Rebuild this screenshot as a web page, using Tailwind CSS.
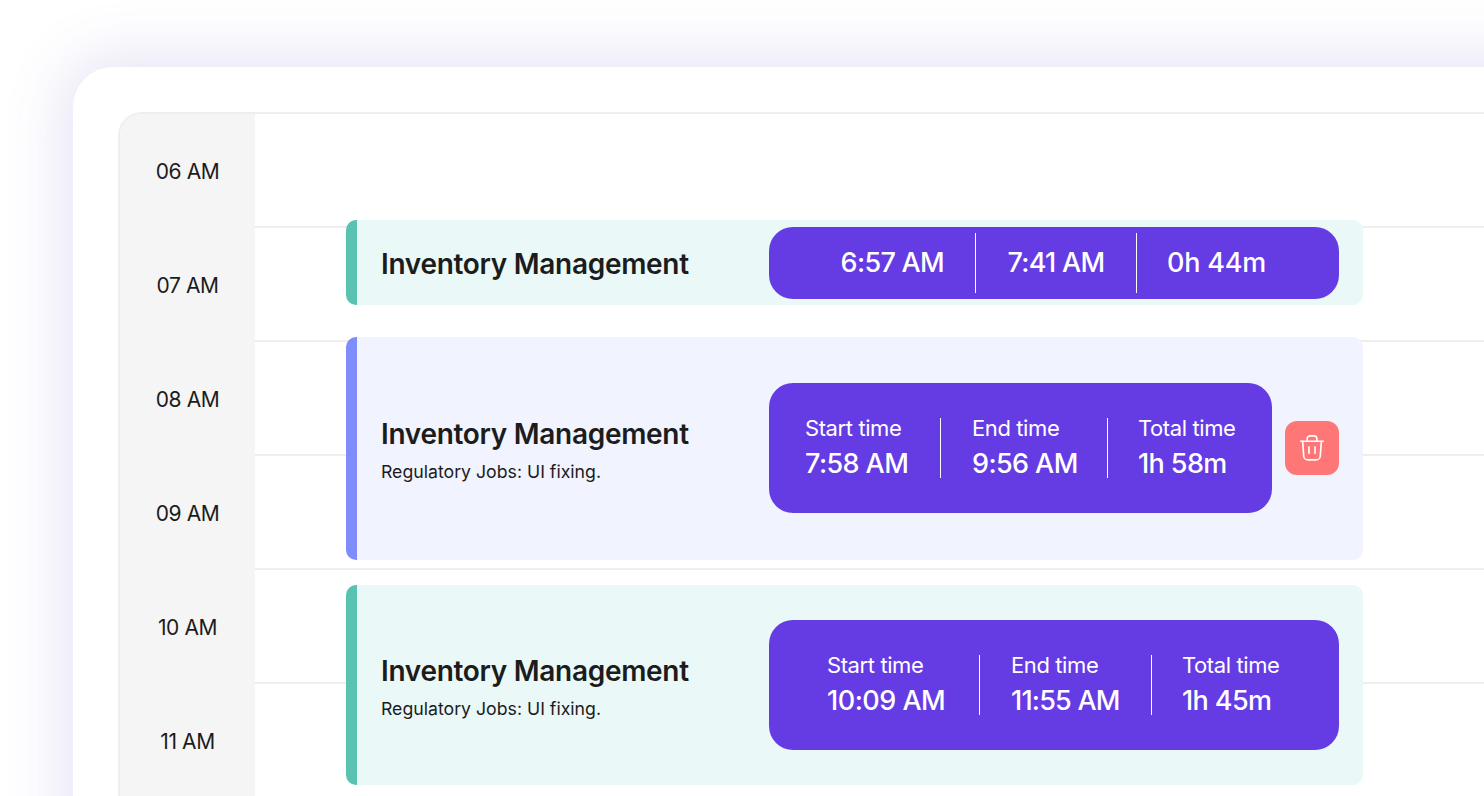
<!DOCTYPE html>
<html lang="en">
<head>
    <meta charset="UTF-8">
    <title>Timesheet</title>
    <script src="https://cdn.jsdelivr.net/npm/@tailwindcss/browser@4"></script>
</head>
<body class="bg-white font-['Inter',sans-serif] text-[#1c1c1c] h-[796px] overflow-hidden">
    <div class="h-[796px] w-[1484px] overflow-hidden pt-[67px] pl-[73px]">
        <!-- white panel, runs off the right and bottom -->
        <div class="w-[1500px] h-[900px] bg-white rounded-tl-[40px] p-[45px] shadow-[0_0_60px_10px_rgba(88,70,190,0.15)]">
            <div class="relative flex h-[800px] border-2 border-[#eeeeee] rounded-tl-[24px] overflow-hidden">
                <!-- hours -->
                <div class="w-[135px] shrink-0 bg-[#f5f5f5] flex flex-col text-[21px] tracking-[-0.4px]">
                    <div class="h-[114px] flex items-center justify-center pt-[2px]">06 AM</div>
                    <div class="h-[114px] flex items-center justify-center pt-[2px]">07 AM</div>
                    <div class="h-[114px] flex items-center justify-center pt-[2px]">08 AM</div>
                    <div class="h-[114px] flex items-center justify-center pt-[2px]">09 AM</div>
                    <div class="h-[114px] flex items-center justify-center pt-[2px]">10 AM</div>
                    <div class="h-[114px] flex items-center justify-center pt-[2px]">11 AM</div>
                </div>
                <!-- hour lines -->
                <div class="flex-1 flex flex-col">
                    <div class="h-[114px] border-b-2 border-[#eeeeee]"></div>
                    <div class="h-[114px] border-b-2 border-[#eeeeee]"></div>
                    <div class="h-[114px] border-b-2 border-[#eeeeee]"></div>
                    <div class="h-[114px] border-b-2 border-[#eeeeee]"></div>
                    <div class="h-[114px] border-b-2 border-[#eeeeee]"></div>
                    <div class="h-[114px] border-b-2 border-[#eeeeee]"></div>
                </div>

                <!-- events sit over the hour lines -->
                <div class="absolute left-[226px] top-[106px] w-[1017px] flex flex-col">
                    <div class="h-[85px] flex items-center bg-[#eaf8f7] rounded-[10px] border-l-[11px] border-[#5ac2b0] pl-[24px] pr-[24px]">
                        <div class="w-[388px] shrink-0">
                            <h3 class="text-[28px] font-semibold tracking-[-0.3px] leading-[34px] mt-[2px]">Inventory Management</h3>
                        </div>
                        <div class="h-[72px] w-[570px] bg-[#653ce4] rounded-[24px] flex items-center text-white text-[27px] font-medium tracking-[-0.7px]">
                            <div class="w-[207px] h-[60px] border-r border-white flex items-center justify-end pr-[31px] pt-[2px]">6:57 AM</div>
                            <div class="w-[161px] h-[60px] border-r border-white flex items-center justify-center pt-[2px]">7:41 AM</div>
                            <div class="pl-[30px] pt-[2px] tracking-[-0.2px]">0h 44m</div>
                        </div>
                    </div>

                    <div class="mt-[32px] h-[223px] flex items-center bg-[#f1f3ff] rounded-[10px] border-l-[11px] border-[#7f8cfb] pl-[24px] pr-[24px]">
                        <div class="w-[388px] shrink-0 pt-[2px]">
                            <h3 class="text-[28px] font-semibold tracking-[-0.3px] leading-[34px]">Inventory Management</h3>
                            <p class="text-[17.7px] mt-[10px] leading-[22px]">Regulatory Jobs: UI fixing.</p>
                        </div>
                        <div class="h-[130px] w-[503px] mb-[1px] bg-[#653ce4] rounded-[24px] flex items-center text-white">
                            <div class="w-[172px] h-[60px] border-r border-white pl-[36px]">
                                <div class="text-[22px] tracking-[-0.4px] leading-[20px]">Start time</div>
                                <div class="text-[27px] font-medium tracking-[-0.6px] leading-[32px] mt-[10px]">7:58 AM</div>
                            </div>
                            <div class="w-[167px] h-[60px] border-r border-white pl-[31px]">
                                <div class="text-[22px] tracking-[-0.4px] leading-[20px]">End time</div>
                                <div class="text-[27px] font-medium tracking-[-0.6px] leading-[32px] mt-[10px]">9:56 AM</div>
                            </div>
                            <div class="h-[60px] pl-[30px]">
                                <div class="text-[22px] tracking-[-0.4px] leading-[20px]">Total time</div>
                                <div class="text-[27px] font-medium tracking-[-0.6px] leading-[32px] mt-[10px]">1h 58m</div>
                            </div>
                        </div>
                        <div class="ml-[13px] mb-[1px] w-[54px] h-[54px] bg-[#ff7676] rounded-[12px] flex items-center justify-center">
                            <svg width="28" height="28" viewBox="0 0 24 24" fill="none" stroke="#fff" stroke-width="1.4" stroke-linecap="round" stroke-linejoin="round">
                                <path d="M2.2 6.2h19.6"/>
                                <path d="M7.8 6V4.2a2.6 2.6 0 0 1 2.6-2.6h3.2a2.6 2.6 0 0 1 2.6 2.6V6"/>
                                <path d="M4 6.2l.9 12.6a3.6 3.6 0 0 0 3.6 3.4h7a3.6 3.6 0 0 0 3.6-3.4L20 6.2"/>
                                <path d="M9.4 11v5.6"/>
                                <path d="M14.6 11v5.6"/>
                            </svg>
                        </div>
                    </div>

                    <div class="mt-[25px] h-[200px] flex items-center bg-[#eaf8f7] rounded-[10px] border-l-[11px] border-[#5ac2b0] pl-[24px] pr-[24px]">
                        <div class="w-[388px] shrink-0 pt-[3px]">
                            <h3 class="text-[28px] font-semibold tracking-[-0.3px] leading-[34px]">Inventory Management</h3>
                            <p class="text-[17.7px] mt-[10px] leading-[22px]">Regulatory Jobs: UI fixing.</p>
                        </div>
                        <div class="h-[130px] w-[570px] bg-[#653ce4] rounded-[24px] flex items-center text-white">
                            <div class="w-[211px] h-[60px] border-r border-white pl-[58px]">
                                <div class="text-[22px] tracking-[-0.4px] leading-[20px]">Start time</div>
                                <div class="text-[27px] font-medium tracking-[-0.5px] leading-[32px] mt-[10px]">10:09 AM</div>
                            </div>
                            <div class="w-[172px] h-[60px] border-r border-white pl-[31px]">
                                <div class="text-[22px] tracking-[-0.4px] leading-[20px]">End time</div>
                                <div class="text-[27px] font-medium tracking-[-0.8px] leading-[32px] mt-[10px]">11:55 AM</div>
                            </div>
                            <div class="h-[60px] pl-[30px]">
                                <div class="text-[22px] tracking-[-0.4px] leading-[20px]">Total time</div>
                                <div class="text-[27px] font-medium tracking-[-0.6px] leading-[32px] mt-[10px]">1h 45m</div>
                            </div>
                        </div>
                    </div>
                </div>
            </div>
        </div>
    </div>
</body>
</html>
